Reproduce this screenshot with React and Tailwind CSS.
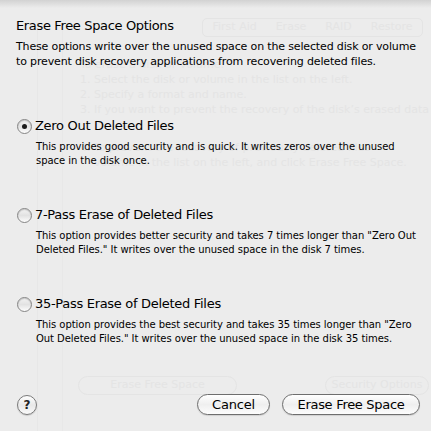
import React from "react";

const font = { fontFamily: '"DejaVu Sans", "Lucida Grande", Verdana, sans-serif' };

function Radio({ checked }) {
  return (
    <span className="relative flex h-[15px] w-[15px] shrink-0 items-center justify-center rounded-full border border-[#858585] bg-gradient-to-b from-[#f4f4f4] via-[#e2e2e2] to-[#fdfdfd] shadow-[inset_0_1px_1px_rgba(0,0,0,0.18)]">
      {checked && <span className="h-[5px] w-[5px] rounded-full bg-[#1a1a1a]" />}
    </span>
  );
}

function Option({ checked, label, lines }) {
  return (
    <div className="flex flex-col">
      <div className="flex h-[16px] items-center">
        <div className="ml-[17px]">
          <Radio checked={checked} />
        </div>
        <span className="ml-[3px] whitespace-nowrap text-[13px] leading-[16px] tracking-[-0.3px] text-black">
          {label}
        </span>
      </div>
      <div className="ml-[36px] mt-[6px] whitespace-nowrap text-[10px] leading-[14px] tracking-[-0.05px] text-black">
        {lines.map((l, i) => (
          <div key={i}>{l}</div>
        ))}
      </div>
    </div>
  );
}

function Ghost() {
  return (
    <div className="pointer-events-none absolute inset-0 overflow-hidden whitespace-nowrap text-[11px] text-[#e4e4e4]">
      <div className="absolute left-[202px] top-[18px] flex h-[19px] w-[221px] items-center justify-around rounded-[5px] border border-[#e4e4e4]">
        <span>First Aid</span>
        <span>Erase</span>
        <span>RAID</span>
        <span>Restore</span>
      </div>
      <div className="absolute left-[37px] top-[30px] h-[401px] w-px bg-[#e7e7e7]" />
      <div className="absolute left-[62px] top-[30px] h-[401px] w-px bg-[#e8e8e8]" />
      <div className="absolute left-[80px] top-[57px] leading-[15px]">
        <div>To erase a disk or volume:</div>
        <div>1. Select the disk or volume in the list on the left.</div>
        <div>2. Specify a format and name.</div>
        <div>3. If you want to prevent the recovery of the disk’s erased data</div>
      </div>
      <div className="absolute left-[80px] top-[140px] leading-[15px]">
        <div>4. To prevent the recovery of previously deleted files</div>
        <div>&nbsp;&nbsp;&nbsp;&nbsp;volume in the list on the left, and click Erase Free Space.</div>
      </div>
      <div className="absolute left-[78px] top-[376px] flex h-[19px] w-[159px] items-center justify-center rounded-full border border-[#e4e4e4]">
        Erase Free Space
      </div>
      <div className="absolute left-[325px] top-[376px] flex h-[19px] w-[104px] items-center justify-center rounded-full border border-[#e4e4e4]">
        Security Options
      </div>
    </div>
  );
}

export default function App() {
  return (
    <div
      className="relative h-[431px] w-[431px] overflow-hidden bg-[#ececec] antialiased"
      style={font}
    >
      <Ghost />
      <div className="absolute inset-x-0 top-0 h-[8px] bg-gradient-to-b from-[#d2d2d2] to-[#ececec]/0" />
      <div className="relative flex h-full flex-col">
        <div className="ml-[16px] mt-[18px] whitespace-nowrap text-[13px] leading-[16px] tracking-[-0.35px] text-black">
          Erase Free Space Options
        </div>
        <div className="ml-[16px] mt-[6px] whitespace-nowrap text-[11px] leading-[14.5px] tracking-[-0.15px] text-black">
          <div>These options write over the unused space on the selected disk or volume</div>
          <div>to prevent disk recovery applications from recovering deleted files.</div>
        </div>
        <div className="mt-[49px] flex flex-col gap-[39px]">
          <Option
            checked
            label="Zero Out Deleted Files"
            lines={[
              "This provides good security and is quick. It writes zeros over the unused",
              "space in the disk once.",
            ]}
          />
          <Option
            label="7-Pass Erase of Deleted Files"
            lines={[
              "This option provides better security and takes 7 times longer than \"Zero Out",
              "Deleted Files.\" It writes over the unused space in the disk 7 times.",
            ]}
          />
          <Option
            label="35-Pass Erase of Deleted Files"
            lines={[
              "This option provides the best security and takes 35 times longer than \"Zero",
              "Out Deleted Files.\" It writes over the unused space in the disk 35 times.",
            ]}
          />
        </div>
        <div className="mt-auto mb-[16px] flex items-center pl-[17px] pr-[11px]">
          <button className="flex h-[20px] w-[20px] items-center justify-center rounded-full border border-[#7a7a7a] bg-gradient-to-b from-[#ffffff] via-[#e8e8e8] to-[#fafafa] text-[12px] font-bold leading-none text-[#222] shadow-[0_1px_1px_rgba(0,0,0,0.15)]">
            ?
          </button>
          <div className="ml-auto flex gap-[12px]">
            <button className="flex h-[21px] w-[73px] items-center justify-center rounded-full border border-[#6e6e6e] bg-gradient-to-b from-[#ffffff] via-[#efefef] to-[#fdfdfd] text-[13px] leading-none tracking-[-0.2px] text-black shadow-[0_1px_1px_rgba(0,0,0,0.12)]">
              Cancel
            </button>
            <button className="flex h-[21px] w-[138px] items-center justify-center rounded-full border border-[#6e6e6e] bg-gradient-to-b from-[#ffffff] via-[#efefef] to-[#fdfdfd] text-[13px] leading-none tracking-[-0.3px] text-black shadow-[0_1px_1px_rgba(0,0,0,0.12)]">
              Erase Free Space
            </button>
          </div>
        </div>
      </div>
    </div>
  );
}
